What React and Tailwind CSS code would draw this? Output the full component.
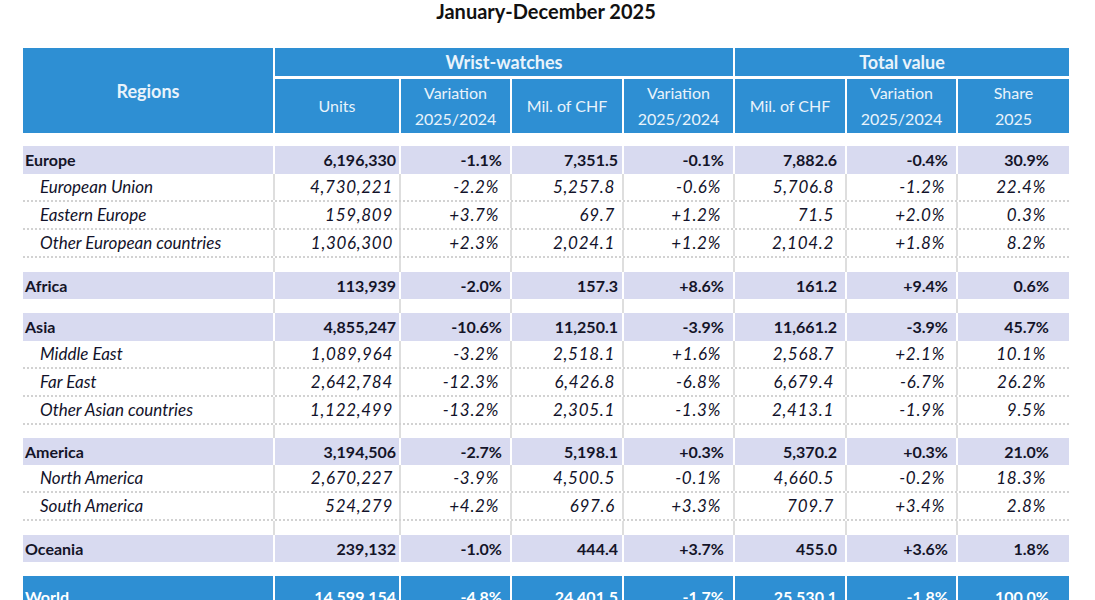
const COLS = 'grid grid-cols-[250px_124px_109px_110px_109px_110px_109px_111px] gap-x-[2px]';
const PADS = ['pr-[3px]', 'pr-[8px]', 'pr-[4px]', 'pr-[9px]', 'pr-[8px]', 'pr-[8px]', 'pr-[20px]'];

const rows = [
  { type: 'space', h: 'h-[13px]', plain: true },
  { type: 'main', h: 'h-[28px]', label: 'Europe', v: ['6,196,330', '-1.1%', '7,351.5', '-0.1%', '7,882.6', '-0.4%', '30.9%'] },
  { type: 'sub', label: 'European Union', v: ['4,730,221', '-2.2%', '5,257.8', '-0.6%', '5,706.8', '-1.2%', '22.4%'] },
  { type: 'sub', label: 'Eastern Europe', v: ['159,809', '+3.7%', '69.7', '+1.2%', '71.5', '+2.0%', '0.3%'] },
  { type: 'sub', label: 'Other European countries', v: ['1,306,300', '+2.3%', '2,024.1', '+1.2%', '2,104.2', '+1.8%', '8.2%'] },
  { type: 'space', h: 'h-[14px]' },
  { type: 'main', h: 'h-[27px]', label: 'Africa', v: ['113,939', '-2.0%', '157.3', '+8.6%', '161.2', '+9.4%', '0.6%'] },
  { type: 'space', h: 'h-[14px]' },
  { type: 'main', h: 'h-[28px]', label: 'Asia', v: ['4,855,247', '-10.6%', '11,250.1', '-3.9%', '11,661.2', '-3.9%', '45.7%'] },
  { type: 'sub', label: 'Middle East', v: ['1,089,964', '-3.2%', '2,518.1', '+1.6%', '2,568.7', '+2.1%', '10.1%'] },
  { type: 'sub', label: 'Far East', v: ['2,642,784', '-12.3%', '6,426.8', '-6.8%', '6,679.4', '-6.7%', '26.2%'] },
  { type: 'sub', label: 'Other Asian countries', v: ['1,122,499', '-13.2%', '2,305.1', '-1.3%', '2,413.1', '-1.9%', '9.5%'] },
  { type: 'space', h: 'h-[13px]' },
  { type: 'main', h: 'h-[27px]', label: 'America', v: ['3,194,506', '-2.7%', '5,198.1', '+0.3%', '5,370.2', '+0.3%', '21.0%'] },
  { type: 'sub', label: 'North America', v: ['2,670,227', '-3.9%', '4,500.5', '-0.1%', '4,660.5', '-0.2%', '18.3%'] },
  { type: 'sub', label: 'South America', v: ['524,279', '+4.2%', '697.6', '+3.3%', '709.7', '+3.4%', '2.8%'] },
  { type: 'space', h: 'h-[14px]' },
  { type: 'main', h: 'h-[27px]', label: 'Oceania', v: ['239,132', '-1.0%', '444.4', '+3.7%', '455.0', '+3.6%', '1.8%'] },
  { type: 'space', h: 'h-[14px]', plain: true },
  { type: 'world', h: 'h-[42px]', label: 'World', v: ['14,599,154', '-4.8%', '24,401.5', '-1.7%', '25,530.1', '-1.8%', '100.0%'] },
];

function Row({ row }) {
  if (row.type === 'space') {
    if (row.plain) return <div className={row.h} />;
    return (
      <div className={`${COLS} ${row.h} bg-[#dedede]`}>
        {Array.from({ length: 8 }).map((_, i) => (
          <div key={i} className="bg-white" />
        ))}
      </div>
    );
  }

  if (row.type === 'sub') {
    return (
      <div className={`${COLS} h-[28px] bg-[#dedede] bg-clip-padding border-b-2 border-dotted border-[#d2d2d2] italic text-[17px] text-[#12122a]`}>
        <div className="bg-white flex items-center pl-[17px]">{row.label}</div>
        {row.v.map((val, i) => (
          <div key={i} className={`bg-white flex items-center justify-end ${PADS[i]}`}>
            <span className="pr-[3px] tracking-[0.7px]">{val}</span>
          </div>
        ))}
      </div>
    );
  }

  const cell = row.type === 'world' ? 'bg-[#2e8fd3] text-white' : 'bg-[#d8daf0] text-[#141428]';
  return (
    <div className={`${COLS} ${row.h} font-bold`}>
      <div className={`${cell} flex items-center pl-[2px]`}>{row.label}</div>
      {row.v.map((val, i) => (
        <div key={i} className={`${cell} flex items-center justify-end ${PADS[i]}`}>
          {val}
        </div>
      ))}
    </div>
  );
}

function Head({ children, className = '' }) {
  return (
    <div className={`bg-[#2e8fd3] text-[#e9f3fb] flex flex-col items-center justify-center text-center leading-[26px] ${className}`}>
      {children}
    </div>
  );
}

export default function App() {
  return (
    <div className="bg-white w-[1095px] h-[600px] overflow-hidden pl-[23px] text-[16px] font-['Lato',sans-serif]">
      <div className="w-[1046px]">
        <h1 className="text-center text-[20px] leading-[22px] font-bold text-[#111] h-[48px]">
          January-December 2025
        </h1>

        <div className="grid grid-cols-[250px_124px_109px_110px_109px_110px_109px_111px] grid-rows-[28px_54px] gap-x-[2px] gap-y-[3px]">
          <Head className="row-span-2 text-[18px] font-bold">Regions</Head>
          <Head className="col-span-4 text-[18px] font-bold">Wrist-watches</Head>
          <Head className="col-span-3 text-[18px] font-bold">Total value</Head>
          <Head>Units</Head>
          <Head>
            <span>Variation</span>
            <span>2025/2024</span>
          </Head>
          <Head>Mil. of CHF</Head>
          <Head>
            <span>Variation</span>
            <span>2025/2024</span>
          </Head>
          <Head>Mil. of CHF</Head>
          <Head>
            <span>Variation</span>
            <span>2025/2024</span>
          </Head>
          <Head>
            <span>Share</span>
            <span>2025</span>
          </Head>
        </div>

        {rows.map((row, i) => (
          <Row key={i} row={row} />
        ))}
      </div>
    </div>
  );
}
